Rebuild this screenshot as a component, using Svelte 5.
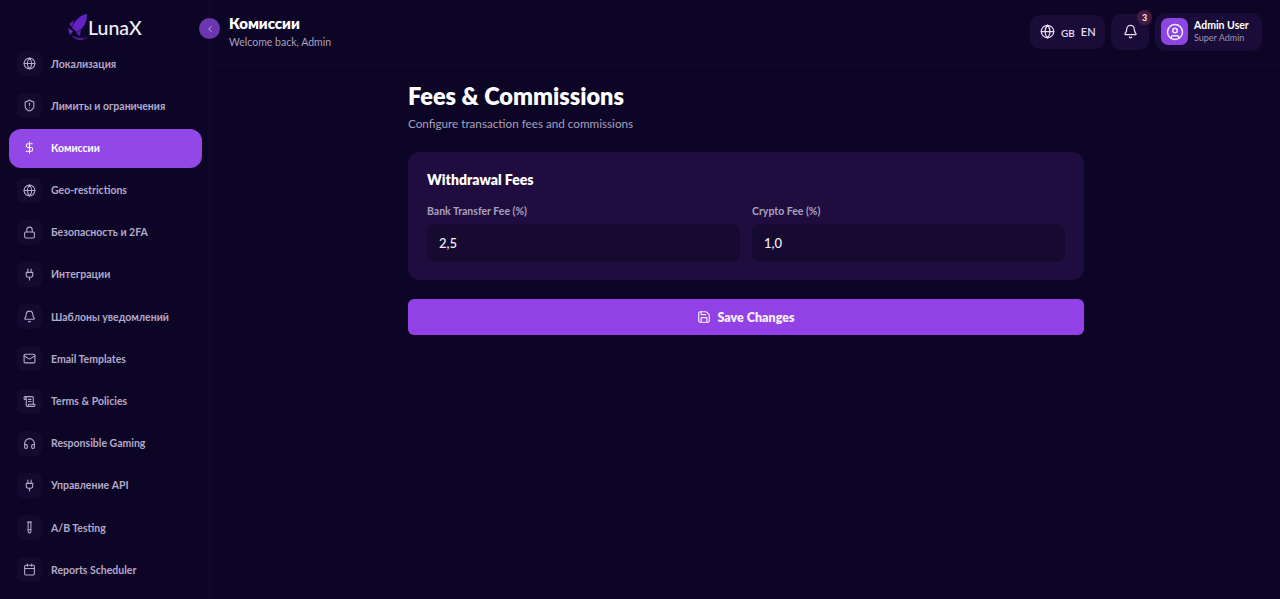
<script>
  const icons = {
    globe: '<circle cx="12" cy="12" r="10"/><path d="M12 2a14.5 14.5 0 0 0 0 20 14.5 14.5 0 0 0 0-20"/><path d="M2 12h20"/>',
    shield: '<path d="M20 13c0 5-3.5 7.5-7.66 8.95a1 1 0 0 1-.67-.01C7.5 20.5 4 18 4 13V6a1 1 0 0 1 1-1c2 0 4.5-1.2 6.24-2.72a1.17 1.17 0 0 1 1.52 0C14.51 3.81 17 5 19 5a1 1 0 0 1 1 1z"/><path d="M12 8v4"/><path d="M12 16h.01"/>',
    dollar: '<line x1="12" x2="12" y1="2" y2="22"/><path d="M17 5H9.5a3.5 3.5 0 0 0 0 7h5a3.5 3.5 0 0 1 0 7H6"/>',
    lock: '<rect width="18" height="11" x="3" y="11" rx="2" ry="2"/><path d="M7 11V7a5 5 0 0 1 10 0v4"/>',
    plug: '<path d="M12 22v-5"/><path d="M9 8V2"/><path d="M15 8V2"/><path d="M18 8v5a4 4 0 0 1-4 4h-4a4 4 0 0 1-4-4V8Z"/>',
    bell: '<path d="M10.268 21a2 2 0 0 0 3.464 0"/><path d="M3.262 15.326A1 1 0 0 0 4 17h16a1 1 0 0 0 .74-1.673C19.41 13.956 18 12.499 18 8A6 6 0 0 0 6 8c0 4.499-1.411 5.956-2.738 7.326"/>',
    mail: '<rect width="20" height="16" x="2" y="4" rx="2"/><path d="m22 7-8.97 5.7a1.94 1.94 0 0 1-2.06 0L2 7"/>',
    scroll: '<path d="M15 12h-5"/><path d="M15 8h-5"/><path d="M19 17V5a2 2 0 0 0-2-2H4"/><path d="M8 21h12a2 2 0 0 0 2-2v-1a1 1 0 0 0-1-1H11a1 1 0 0 0-1 1v1a2 2 0 1 1-4 0V5a2 2 0 1 0-4 0v2a1 1 0 0 0 1 1h3"/>',
    headphones: '<path d="M3 14h3a2 2 0 0 1 2 2v3a2 2 0 0 1-2 2H5a2 2 0 0 1-2-2v-7a9 9 0 0 1 18 0v7a2 2 0 0 1-2 2h-1a2 2 0 0 1-2-2v-3a2 2 0 0 1 2-2h3"/>',
    tube: '<path d="M14.5 2v17.5c0 1.4-1.1 2.5-2.5 2.5s-2.5-1.1-2.5-2.5V2"/><path d="M8.5 2h7"/><path d="M14.5 16h-5"/>',
    calendar: '<path d="M8 2v4"/><path d="M16 2v4"/><rect width="18" height="18" x="3" y="4" rx="2"/><path d="M3 10h18"/>',
    chevron: '<path d="m15 18-6-6 6-6"/>',
    user: '<circle cx="12" cy="12" r="10"/><circle cx="12" cy="10" r="3"/><path d="M7 20.662V19a2 2 0 0 1 2-2h6a2 2 0 0 1 2 2v1.662"/>',
    save: '<path d="M15.2 3a2 2 0 0 1 1.4.6l3.8 3.8a2 2 0 0 1 .6 1.4V19a2 2 0 0 1-2 2H5a2 2 0 0 1-2-2V5a2 2 0 0 1 2-2z"/><path d="M17 21v-7a1 1 0 0 0-1-1H8a1 1 0 0 0-1 1v7"/><path d="M7 3v4a1 1 0 0 0 1 1h7"/>'
  };

  const navItems = [
    { label: 'Локализация', icon: 'globe' },
    { label: 'Лимиты и ограничения', icon: 'shield' },
    { label: 'Комиссии', icon: 'dollar', active: true },
    { label: 'Geo-restrictions', icon: 'globe' },
    { label: 'Безопасность и 2FA', icon: 'lock' },
    { label: 'Интеграции', icon: 'plug' },
    { label: 'Шаблоны уведомлений', icon: 'bell' },
    { label: 'Email Templates', icon: 'mail' },
    { label: 'Terms & Policies', icon: 'scroll' },
    { label: 'Responsible Gaming', icon: 'headphones' },
    { label: 'Управление API', icon: 'plug' },
    { label: 'A/B Testing', icon: 'tube' },
    { label: 'Reports Scheduler', icon: 'calendar' }
  ];

  const fees = [
    { label: 'Bank Transfer Fee (%)', value: '2,5' },
    { label: 'Crypto Fee (%)', value: '1,0' }
  ];
</script>

{#snippet icon(name, size)}
  <svg width={size} height={size} viewBox="0 0 24 24" fill="none" stroke="currentColor" stroke-width="2" stroke-linecap="round" stroke-linejoin="round">{@html icons[name]}</svg>
{/snippet}

<div class="layout">
  <aside class="sidebar">
    <div class="logo">
      <svg class="rocket" width="20" height="28" viewBox="0 0 20 28">
        <path d="M19 0 C13 1 8 5 5 11 L4 14 L9 18 L12 16 C17 12 19 7 19 0Z" fill="#6223c2"/>
        <path d="M6 6 L1 10 L4 13Z M13 16 L12 22 L8 19Z" fill="#5a1eb0"/>
        <path d="M0 14 L5 17 L2 21Z" fill="#6d28cf"/>
        <path d="M3 21 C8 28 15 27 20 23 C14 25 8 24 3 21Z" fill="#4b1a96"/>
      </svg>
      <span>LunaX</span>
    </div>
    <nav>
      {#each navItems as item}
        <a href="#top" class="nav-item" class:active={item.active}>
          <span class="nav-icon">{@render icon(item.icon, 13)}</span>
          <span>{item.label}</span>
        </a>
      {/each}
    </nav>
  </aside>

  <div class="main">
    <header>
      <div class="title">
        <button class="collapse" aria-label="Collapse">{@render icon('chevron', 10)}</button>
        <div class="title-text">
          <h2>Комиссии</h2>
          <p>Welcome back, Admin</p>
        </div>
      </div>
      <div class="actions">
        <div class="chip lang">
          {@render icon('globe', 15)}
          <span class="gb">GB</span>
          <span class="en">EN</span>
        </div>
        <div class="chip bell">
          {@render icon('bell', 15)}
          <span class="badge">3</span>
        </div>
        <div class="chip profile">
          <span class="avatar">{@render icon('user', 18)}</span>
          <div>
            <strong>Admin User</strong>
            <small>Super Admin</small>
          </div>
        </div>
      </div>
    </header>

    <main>
      <div class="content">
        <h1>Fees &amp; Commissions</h1>
        <p class="sub">Configure transaction fees and commissions</p>
        <section class="card">
          <h3>Withdrawal Fees</h3>
          <div class="fields">
            {#each fees as fee}
              <label>
                <span>{fee.label}</span>
                <input type="text" value={fee.value} />
              </label>
            {/each}
          </div>
        </section>
        <button class="save">{@render icon('save', 14)} Save Changes</button>
      </div>
    </main>
  </div>
</div>

<style>
  :global(body) {
    background: #0d0526;
    font-family: "Lato", "Noto Sans", sans-serif;
    overflow: hidden;
  }

  .layout {
    display: flex;
    height: 599px;
    overflow: hidden;
    color: #fff;
  }

  .sidebar {
    width: 210px;
    flex: none;
    border-right: 1px solid #150b30;
    box-sizing: border-box;
    overflow: hidden;
  }

  .logo {
    height: 45px;
    display: flex;
    align-items: center;
    padding-left: 68px;
    padding-top: 9px;
    box-sizing: border-box;
    font-size: 19.5px;
    font-weight: 500;
    color: #f1eef8;
  }

  .rocket {
    margin-top: 2px;
  }

  nav {
    display: flex;
    flex-direction: column;
    gap: 3.2px;
    padding: 0 7px 0 9px;
  }

  .nav-item {
    height: 39px;
    box-sizing: border-box;
    padding: 0 0 2px 8px;
    display: flex;
    align-items: center;
    gap: 9px;
    border-radius: 12px;
    color: #b3a9c9;
    font-size: 10.5px;
    font-weight: 700;
    text-decoration: none;
  }

  .nav-item.active {
    background: #9148e6;
    color: #fff;
  }

  .nav-icon {
    width: 25px;
    height: 25px;
    display: flex;
    align-items: center;
    justify-content: center;
    border-radius: 7px;
    background: #130a2f;
  }

  .active .nav-icon {
    background: none;
  }

  .main {
    flex: 1;
    min-width: 0;
  }

  header {
    height: 66px;
    box-sizing: border-box;
    display: flex;
    align-items: center;
    justify-content: space-between;
    padding: 0 18px 0 0;
    border-bottom: 1px solid #120a2c;
  }

  .title {
    display: flex;
    align-items: center;
    gap: 9px;
    margin-left: -11px;
    margin-top: -8px;
  }

  .title-text {
    margin-top: 6px;
  }

  .collapse {
    width: 21px;
    height: 21px;
    padding: 0;
    border: none;
    border-radius: 50%;
    background: #6c36b0;
    color: #d6c4f0;
    display: flex;
    align-items: center;
    justify-content: center;
  }

  h2 {
    margin: 0;
    font-size: 15px;
    font-weight: 800;
    line-height: 18px;
  }

  .title p {
    margin: 3px 0 0;
    font-size: 10.5px;
    line-height: 14px;
    color: #a9a0bd;
  }

  .actions {
    display: flex;
    align-items: center;
    gap: 6px;
    margin-top: -2px;
  }

  .chip {
    position: relative;
    display: flex;
    align-items: center;
    background: #1a0c38;
    border-radius: 10px;
    height: 34px;
    color: #e4deef;
  }

  .lang {
    width: 75px;
    box-sizing: border-box;
    padding-left: 10px;
  }

  .gb {
    font-size: 10px;
    font-weight: 600;
    margin-left: 6px;
    margin-top: 2px;
  }

  .en {
    font-size: 11px;
    font-weight: 600;
    margin-left: 6px;
    margin-top: -1px;
  }

  .bell {
    width: 38px;
    height: 36px;
    justify-content: center;
  }

  .badge {
    position: absolute;
    top: -4px;
    right: -3px;
    width: 15px;
    height: 15px;
    border-radius: 50%;
    background: #4a1a3c;
    color: #f3e6ec;
    font-size: 9px;
    font-weight: 700;
    display: flex;
    align-items: center;
    justify-content: center;
  }

  .profile {
    width: 107px;
    height: 38px;
    box-sizing: border-box;
    padding-left: 6px;
    gap: 6px;
  }

  .avatar {
    width: 27px;
    height: 27px;
    border-radius: 7px;
    background: #8c45e0;
    color: #f1e8fb;
    display: flex;
    align-items: center;
    justify-content: center;
  }

  .profile strong {
    display: block;
    font-size: 10.5px;
    line-height: 13px;
    font-weight: 700;
    color: #fff;
  }

  .profile small {
    display: block;
    font-size: 9px;
    line-height: 12px;
    color: #9d93b3;
  }

  main {
    display: flex;
    justify-content: center;
    padding: 16px 0 0 2px;
  }

  .content {
    width: 676px;
  }

  h1 {
    margin: 0;
    font-size: 23.5px;
    line-height: 28px;
    font-weight: 800;
  }

  .sub {
    margin: 5px 0 0;
    font-size: 11.7px;
    line-height: 16px;
    color: #a9a0bd;
  }

  .card {
    margin-top: 21px;
    padding: 19px 19px 18px;
    height: 128px;
    box-sizing: border-box;
    background: #1f0d40;
    border-radius: 12px;
  }

  h3 {
    margin: 0;
    font-size: 14px;
    line-height: 18px;
    font-weight: 800;
  }

  .fields {
    display: grid;
    grid-template-columns: 1fr 1fr;
    gap: 12px;
    margin-top: 16px;
  }

  label span {
    display: block;
    font-size: 10.5px;
    line-height: 13px;
    color: #a9a0bd;
    font-weight: 700;
  }

  input {
    display: block;
    width: 100%;
    height: 38px;
    box-sizing: border-box;
    margin-top: 6px;
    padding: 0 12px;
    border: none;
    border-radius: 8px;
    background: #170a31;
    color: #f1eef8;
    font: 500 13px "Lato", sans-serif;
    outline: none;
  }

  .save {
    width: 100%;
    height: 36px;
    margin-top: 19px;
    border: none;
    border-radius: 6px;
    background: #9141e6;
    color: #f6effd;
    font: 800 12.5px "Lato", sans-serif;
    display: flex;
    align-items: center;
    justify-content: center;
    gap: 6px;
  }
</style>
